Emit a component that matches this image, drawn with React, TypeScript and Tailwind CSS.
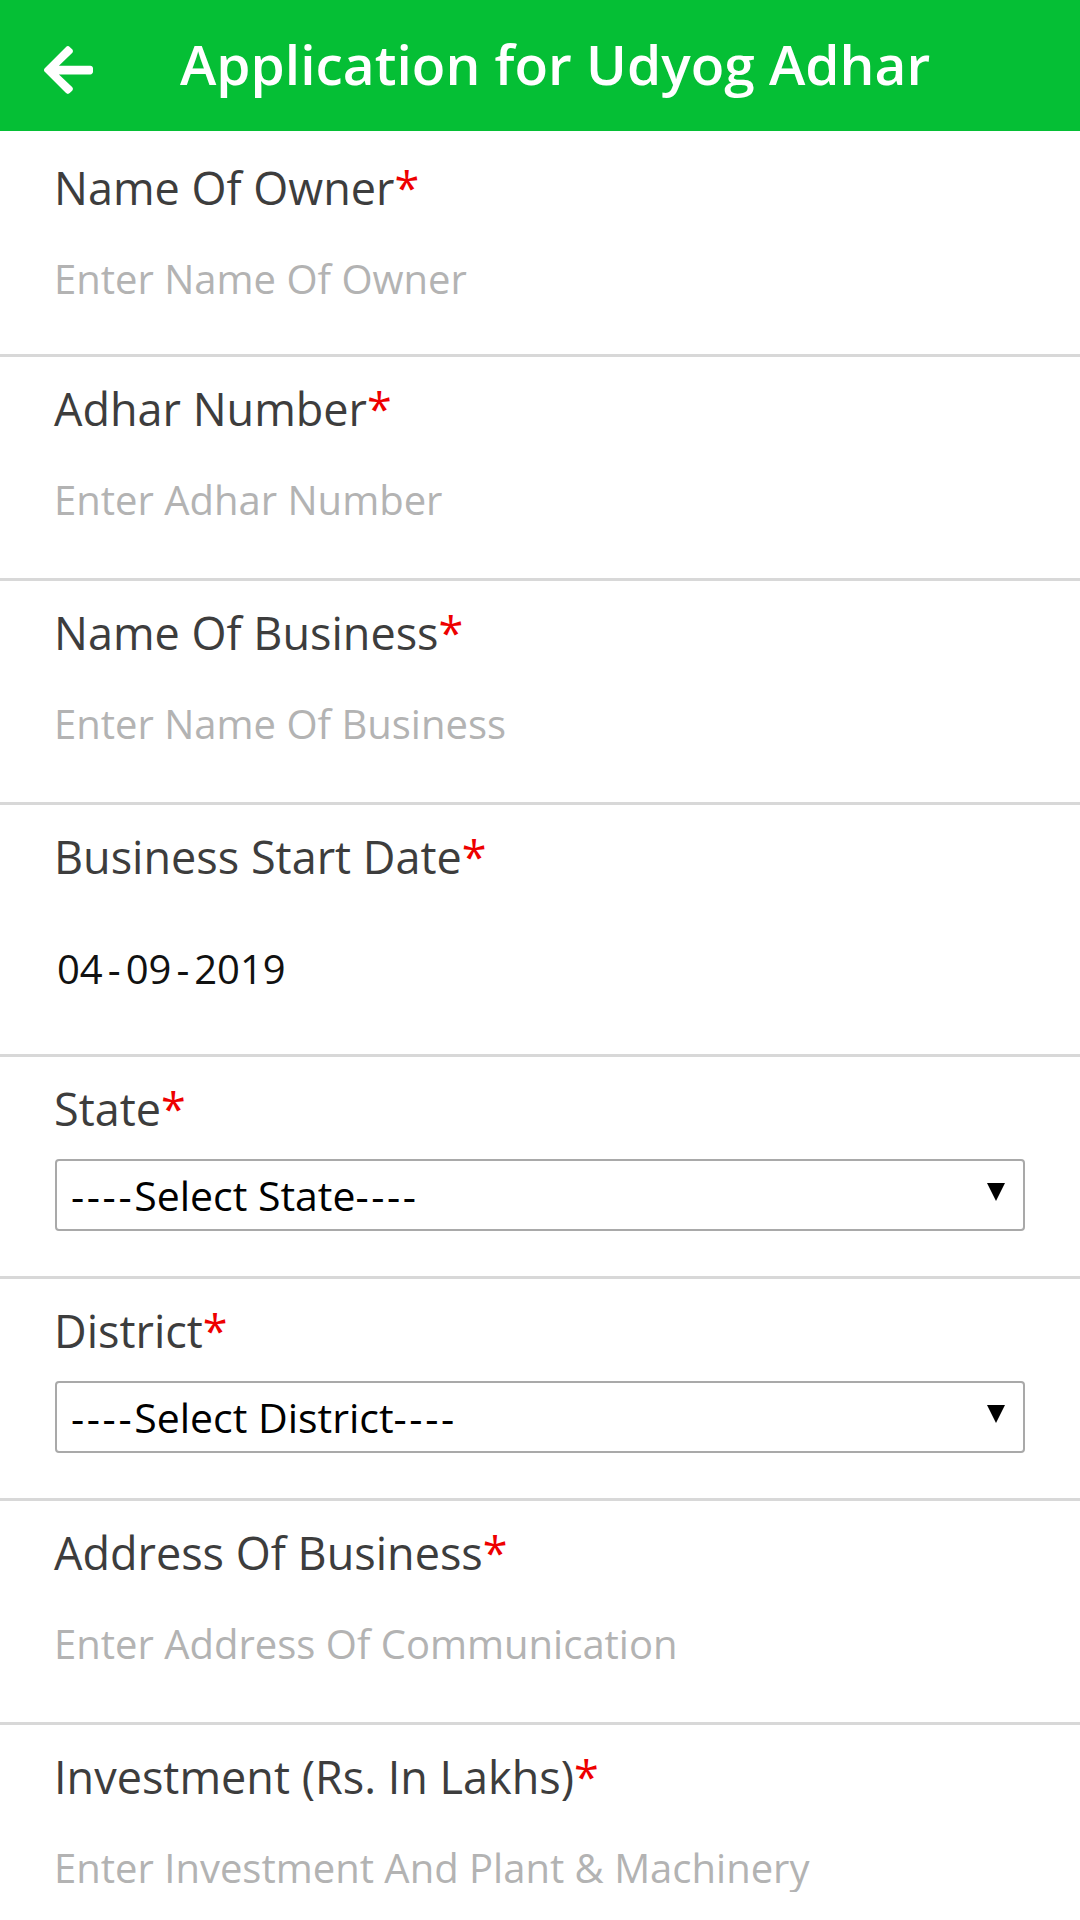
const font = { fontFamily: '"Open Sans", "Noto Sans", sans-serif' };

const Label = ({ text }: { text: string }) => (
  <div className="text-[45px] leading-[54px] text-[#3d3d3d] whitespace-nowrap">
    {text}
    <span className="text-[#ee0000]">*</span>
  </div>
);

const TextField = ({
  label,
  placeholder,
  first = false,
}: {
  label: string;
  placeholder: string;
  first?: boolean;
}) => (
  <div
    className={
      first
        ? "h-[226px] border-b-[3px] border-[#d8d8d8] pl-[54px] pr-[54px] pt-[30px]"
        : "h-[224px] border-b-[3px] border-[#d8d8d8] pl-[54px] pr-[54px] pt-[25px]"
    }
  >
    <Label text={label} />
    <input
      type="text"
      placeholder={placeholder}
      className="mt-[40px] block h-[48px] w-full bg-transparent text-[40px] leading-[48px] text-[#111] outline-none placeholder:text-[#b3b3b3]"
    />
  </div>
);

const SelectField = ({ label, value }: { label: string; value: string }) => (
  <div className="h-[222px] border-b-[3px] border-[#d8d8d8] pl-[55px] pr-[55px] pt-[25px]">
    <div className="-ml-[1px]">
      <Label text={label} />
    </div>
    <div className="mt-[23px] flex h-[72px] w-[970px] items-center justify-between rounded-[4px] border-2 border-[#a9a9a9] bg-white pl-[14px] pr-[18px]">
      <span className="text-[41px] leading-[48px] text-black">
        <span className="tracking-[2.6px]">----</span>
        {value}
        <span className="tracking-[2.6px]">----</span>
      </span>
      <svg width="18" height="18" viewBox="0 0 18 18" className="mb-[6px]">
        <path d="M0 0 H18 L9 18 Z" fill="#000" />
      </svg>
    </div>
  </div>
);

export default function App() {
  return (
    <div className="h-[1920px] w-[1080px] overflow-hidden bg-white" style={font}>
      {/* Top bar */}
      <div className="flex h-[131px] items-center bg-[#05bf35] pl-[44px]">
        <svg width="49" height="56" viewBox="0 0 448 512" className="mt-[8px] shrink-0">
          <path
            fill="#fff"
            d="M257.5 445.1l-22.2 22.2c-9.4 9.4-24.6 9.4-33.9 0L7 273c-9.4-9.4-9.4-24.6 0-33.9L201.4 44.7c9.4-9.4 24.6-9.4 33.9 0l22.2 22.2c9.5 9.5 9.3 25-.4 34.3L136.6 216H424c13.3 0 24 10.7 24 24v32c0 13.3-10.7 24-24 24H136.6l120.5 114.8c9.8 9.3 10 24.8.4 34.3z"
          />
        </svg>
        <h1 className="mb-[3px] ml-[87px] text-[55px] font-semibold text-white whitespace-nowrap">
          Application for Udyog Adhar
        </h1>
      </div>

      <TextField first label="Name Of Owner" placeholder="Enter Name Of Owner" />
      <TextField label="Adhar Number" placeholder="Enter Adhar Number" />
      <TextField label="Name Of Business" placeholder="Enter Name Of Business" />

      {/* Date */}
      <div className="h-[252px] border-b-[3px] border-[#d8d8d8] pl-[54px] pt-[25px]">
        <Label text="Business Start Date" />
        <div className="ml-[3px] mt-[62px] flex text-[40px] leading-[46px] text-[#111]">
          <span>04</span>
          <span className="mx-[5px]">-</span>
          <span>09</span>
          <span className="mx-[5px]">-</span>
          <span>2019</span>
        </div>
      </div>

      <SelectField label="State" value="Select State" />
      <SelectField label="District" value="Select District" />

      <TextField label="Address Of Business" placeholder="Enter Address Of Communication" />
      <TextField label="Investment (Rs. In Lakhs)" placeholder="Enter Investment And Plant & Machinery" />
    </div>
  );
}
